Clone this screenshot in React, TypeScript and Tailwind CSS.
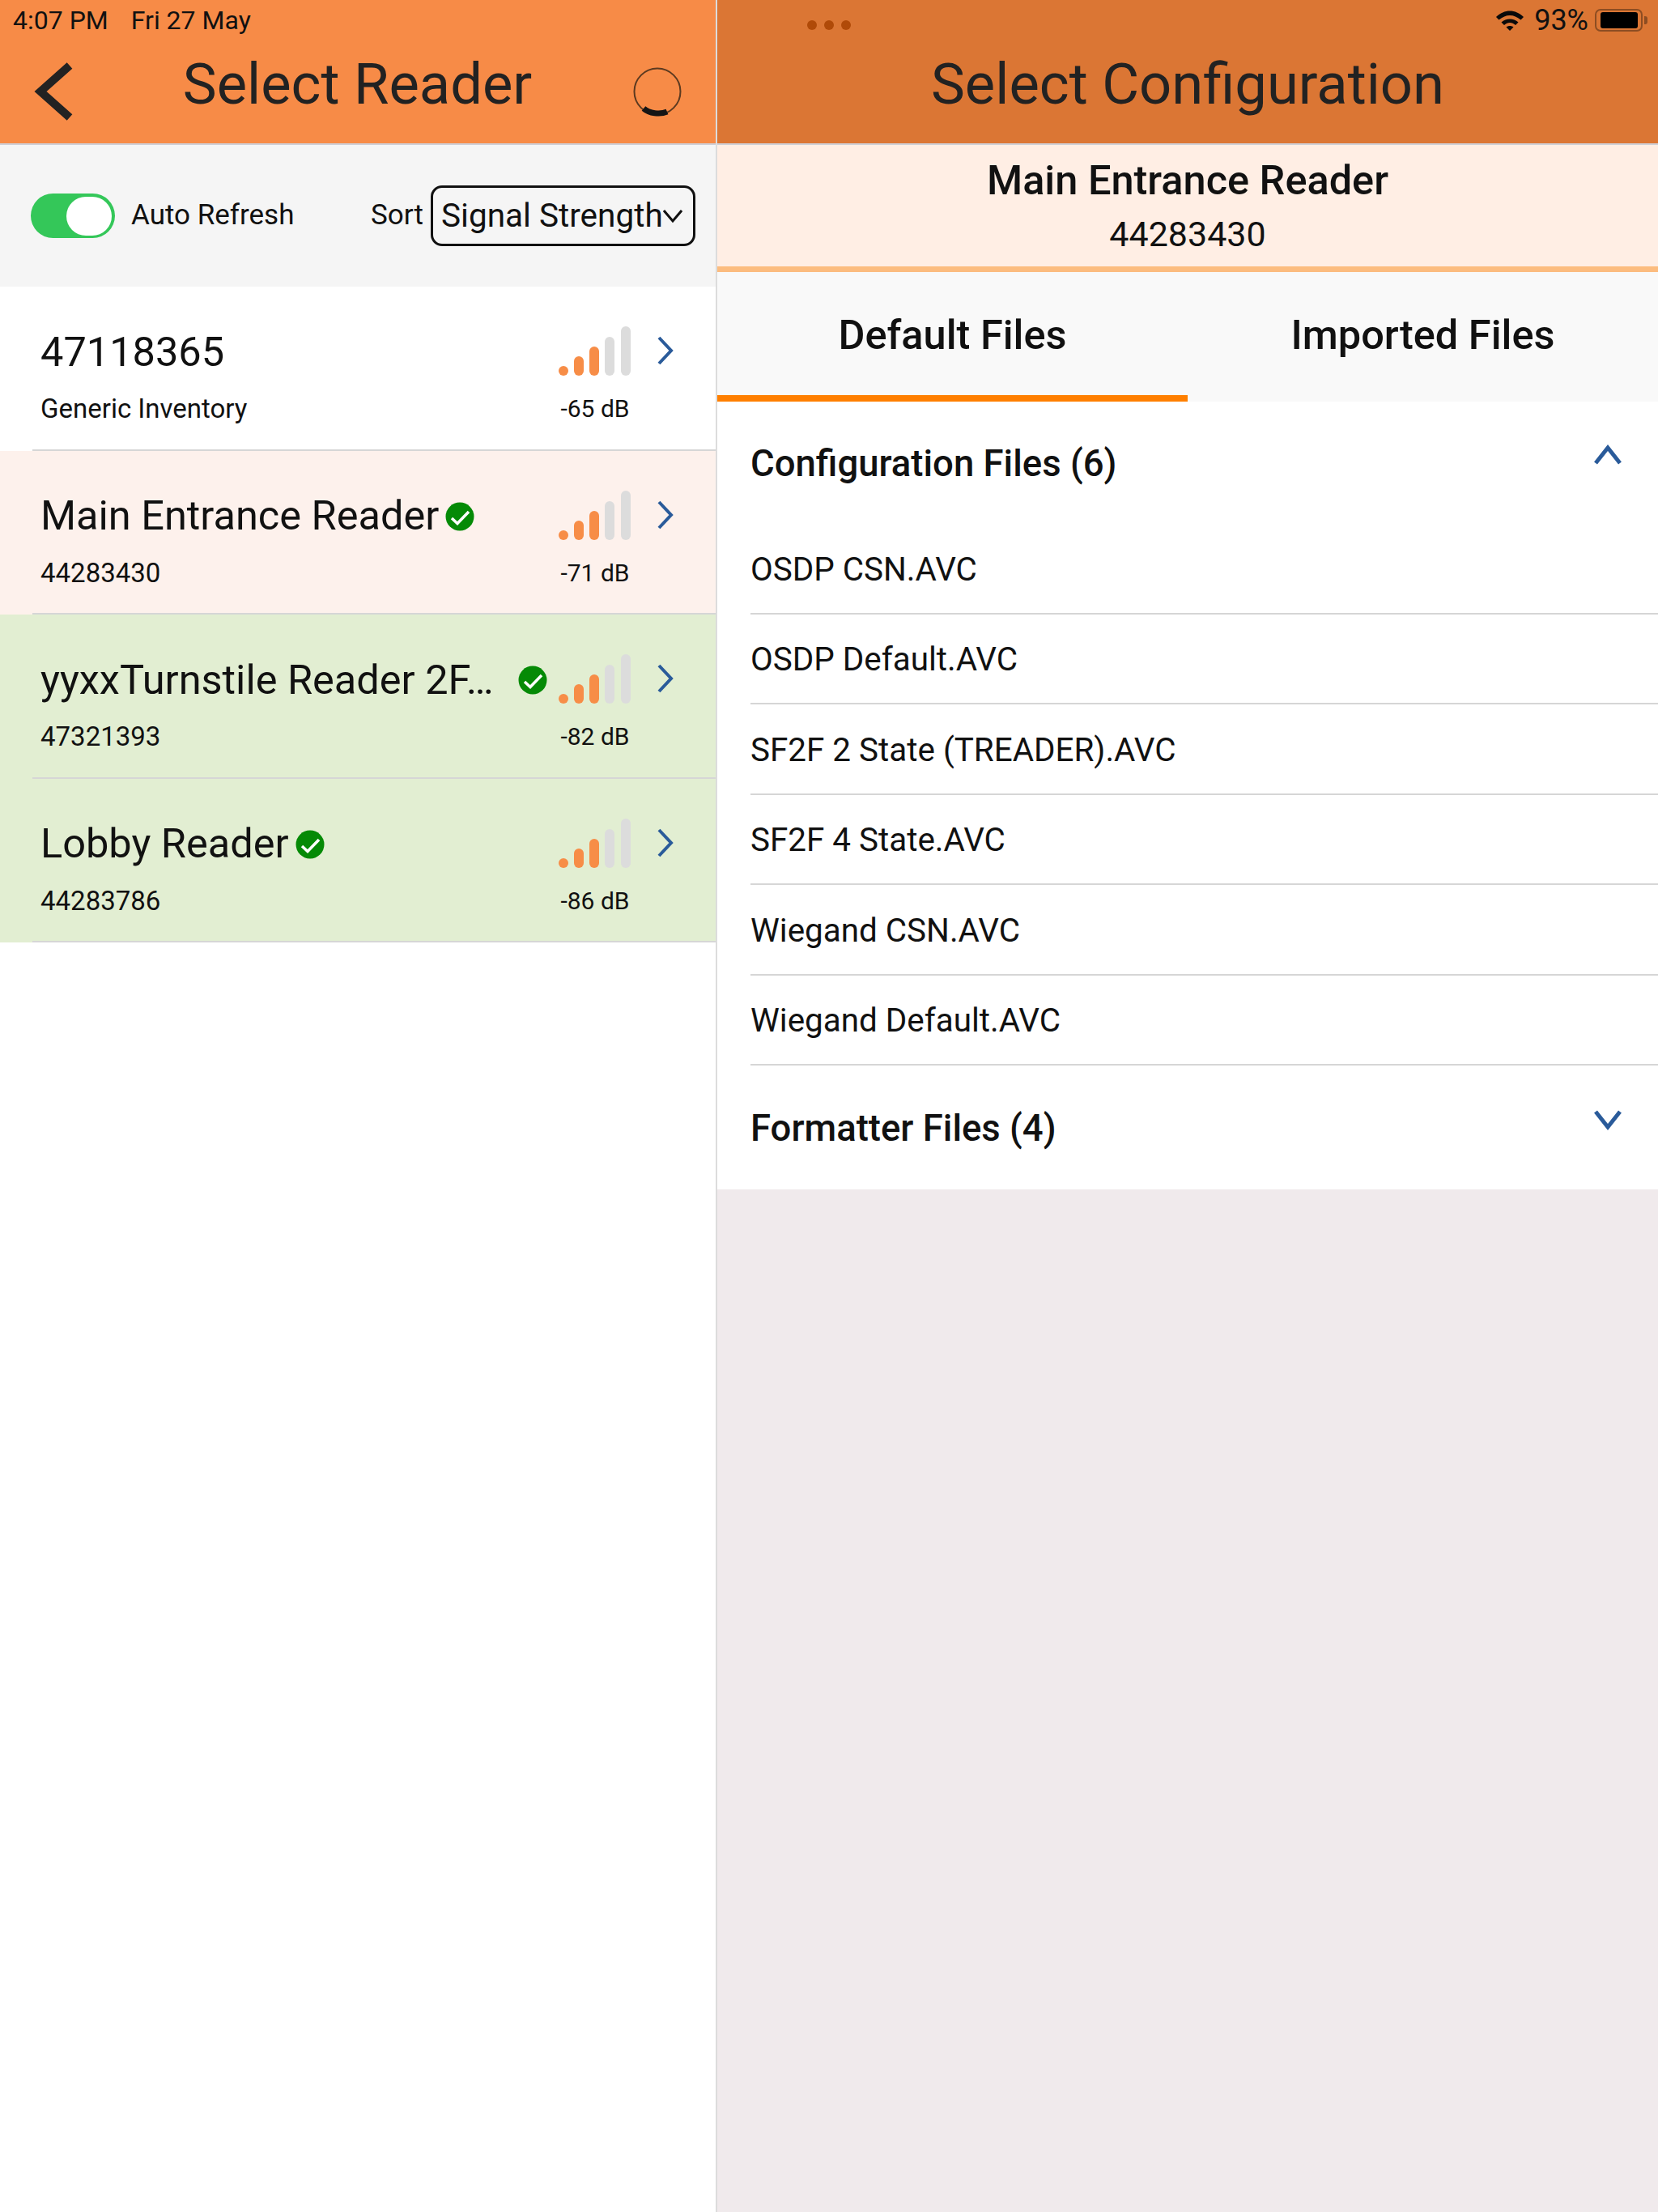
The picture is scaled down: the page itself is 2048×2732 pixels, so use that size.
const readers = [
  { name: "47118365", sub: "Generic Inventory", db: "-65 dB", bg: "bg-white", check: false, nameGap: "" },
  { name: "Main Entrance Reader", sub: "44283430", db: "-71 dB", bg: "bg-[#fdf1ec]", check: true, nameGap: "" },
  { name: "yyxxTurnstile Reader 2F…", sub: "47321393", db: "-82 dB", bg: "bg-[#e2eed2]", check: true, nameGap: "mr-[22px]" },
  { name: "Lobby Reader", sub: "44283786", db: "-86 dB", bg: "bg-[#e2eed2]", check: true, nameGap: "" },
]

const files = ["OSDP CSN.AVC", "OSDP Default.AVC", "SF2F 2 State (TREADER).AVC", "SF2F 4 State.AVC", "Wiegand CSN.AVC", "Wiegand Default.AVC"]

function SignalBars() {
  return (
    <svg width="90" height="62" viewBox="0 0 90 62" className="block">
      <rect x="0" y="49" width="12" height="12" rx="6" fill="#f78d47" />
      <rect x="19" y="37" width="12" height="24" rx="6" fill="#f78d47" />
      <rect x="38" y="25" width="12" height="36" rx="6" fill="#f78d47" />
      <rect x="57" y="13" width="12" height="48" rx="6" fill="#dcdcdc" />
      <rect x="77" y="0" width="12" height="61" rx="6" fill="#dcdcdc" />
    </svg>
  )
}

function Check() {
  return (
    <svg width="36" height="36" viewBox="0 0 36 36" className="ml-[8px] shrink-0">
      <circle cx="18" cy="18" r="17.500" fill="#058a06" />
      <path d="M8 20l7 6.500L29 12" fill="none" stroke="#fff" strokeWidth="3.500" />
    </svg>
  )
}

function Chevron({ d, w, h, sw = 4 }: { d: string, w: number, h: number, sw?: number }) {
  return (
    <svg width={w} height={h} viewBox={`0 0 ${w} ${h}`} className="block">
      <path d={d} fill="none" stroke="#2a5b9a" strokeWidth={sw} />
    </svg>
  )
}

function StatusRight() {
  return (
    <div className="flex items-center h-[30px] justify-end pr-[13px]">
      <svg width="36" height="26" viewBox="0 0 36 26" className="mr-[12px]">
        <path d="M1 9C11 -1 25 -1 35 9l-3.500 3.500C23 5 13 5 4.500 12.500z" fill="#0a0a0a" />
        <path d="M7.500 15.500C13.500 10 22.500 10 28.500 15.500L25 19C20.500 15 15.500 15 11 19z" fill="#0a0a0a" />
        <path d="M13.500 21.500C16 19.500 20 19.500 22.500 21.500L18 26z" fill="#0a0a0a" />
      </svg>
      <span className="text-[36px] leading-[30px] text-[#111] mr-[8px]">93%</span>
      <div className="w-[59px] h-[28px] border-2 border-[#8d4d22] rounded-[7px] flex items-center justify-center">
        <div className="w-[46px] h-[20px] bg-black rounded-[3px]" />
      </div>
      <div className="w-[4px] h-[10px] ml-[2px] bg-[#8d4d22] rounded-r-[3px]" />
    </div>
  )
}

export default function App() {
  return (
    <div className="flex w-[2048px] h-[2732px] font-['Roboto',sans-serif] text-[#111] overflow-hidden">
      <div className="w-[886px] shrink-0 bg-white border-r-2 border-[#dcdcdc] flex flex-col">
        <div className="h-[179px] shrink-0 bg-[#f78b47] border-b-2 border-[#cfcfd6] pt-[10px]">
          <div className="h-[30px] flex items-center pl-[16px] text-[32px] leading-[30px] text-[#111]">
            <span>4:07 PM</span>
            <span className="ml-[28px]">Fri 27 May</span>
          </div>
          <div className="h-[128px] flex items-center text-[#222]">
            <div className="flex-1 pl-[38px]">
              <svg width="54" height="72" viewBox="0 0 54 72" className="block mt-[17px]">
                <path d="M48 4L12 36l36 32" fill="none" stroke="#222" strokeWidth="10" />
              </svg>
            </div>
            <h1 className="text-[70.500px] leading-none whitespace-nowrap ml-[3px]">Select Reader</h1>
            <div className="flex-1 flex justify-end pr-[42px]">
              <svg width="60" height="62" viewBox="0 0 60 62" className="block mt-[17px]">
                <circle cx="30" cy="31" r="28.500" fill="none" stroke="#5c3a20" strokeWidth="2" />
                <path d="M13 52C20 58 33 60 42 56" fill="none" stroke="#151515" strokeWidth="7" />
              </svg>
            </div>
          </div>
        </div>

        <div className="h-[175px] shrink-0 bg-[#f5f5f5] flex items-center pl-[38px] pr-[25px] text-[35px]">
          <div className="w-[104px] h-[55px] rounded-full bg-[#34c759] flex items-center justify-end pr-[4px]">
            <div className="w-[56px] h-[48px] rounded-full bg-white" />
          </div>
          <span className="ml-[20px]">Auto Refresh</span>
          <span className="ml-auto">Sort</span>
          <div className="ml-[9px] w-[327px] h-[75px] border-[3px] border-[#111] rounded-[14px] flex items-center justify-between pl-[10px] pr-[13px]">
            <span className="text-[40.500px] whitespace-nowrap">Signal Strength</span>
            <svg width="24" height="18" viewBox="0 0 24 18"><path d="M1 2l11 13L23 2" fill="none" stroke="#111" strokeWidth="3" /></svg>
          </div>
        </div>

        {readers.map((r) => (
          <div key={r.sub} className={`h-[202.500px] shrink-0 flex flex-col ${r.bg}`}>
            <div className="flex-1 flex pl-[50px]">
              <div className="w-[631px] min-w-0">
                <div className="flex items-center h-[90px] mt-[36px]">
                  <span className={`text-[50.500px] leading-none whitespace-nowrap ${r.nameGap}`}>{r.name}</span>
                  {r.check && <Check />}
                </div>
                <div className="text-[33px] leading-[40px] mt-[5px]">{r.sub}</div>
              </div>
              <div className="ml-[9px] w-[90px] pt-[49px] flex flex-col items-center">
                <SignalBars />
                <div className="text-[30px] leading-[40px] mt-[20px] whitespace-nowrap">{r.db}</div>
              </div>
              <div className="ml-[31px] pt-[60px]">
                <Chevron w={22} h={38} d="M3 3l15 16L3 35" />
              </div>
            </div>
            <div className="ml-[40px] h-[2px] bg-[#d6d6d6]" />
          </div>
        ))}
      </div>

      <div className="flex-1 min-w-0 bg-[#f0eaec] flex flex-col">
        <div className="h-[179px] shrink-0 bg-[#db7634] border-b-2 border-[#cfcfd6] pt-[10px] relative">
          <div className="absolute left-[111px] top-[25px] flex gap-[9px]">
            <div className="w-[12px] h-[12px] rounded-full bg-[#b04a08]" />
            <div className="w-[12px] h-[12px] rounded-full bg-[#b04a08]" />
            <div className="w-[12px] h-[12px] rounded-full bg-[#b04a08]" />
          </div>
          <StatusRight />
          <div className="h-[128px] flex items-center justify-center">
            <h1 className="text-[70.500px] leading-none text-[#222] whitespace-nowrap">Select Configuration</h1>
          </div>
        </div>

        <div className="h-[150px] shrink-0 bg-[#ffeee4] flex flex-col items-center">
          <div className="text-[50.500px] font-medium leading-none mt-[19px] whitespace-nowrap">Main Entrance Reader</div>
          <div className="text-[43px] leading-none mt-[19px]">44283430</div>
        </div>
        <div className="h-[7px] shrink-0 bg-[#fcbc7f]" />

        <div className="h-[160px] shrink-0 bg-[#f9f9f9] flex text-[50.500px] font-medium">
          <div className="flex-1 flex items-center justify-center pt-[3px] border-b-[8px] border-[#ff7f00]">Default Files</div>
          <div className="flex-1 flex items-center justify-center pt-[3px] border-b-[8px] border-transparent">Imported Files</div>
        </div>

        <div className="bg-white">
          <div className="h-[151px] flex items-center justify-between pl-[41px] pr-[44px]">
            <span className="text-[45.500px] font-medium mt-[3px]">Configuration Files (6)</span>
            <div className="-mt-[22px]"><Chevron w={36} h={26} sw={5} d="M3 24L18 5l15 19" /></div>
          </div>
          <div className="pl-[41px]">
            {files.map((f) => (
              <div key={f} className="h-[111.500px] flex items-center pt-[5px] text-[40.400px] border-b-2 border-[#d6d6d6]">{f}</div>
            ))}
          </div>
          <div className="h-[153px] flex items-center justify-between pl-[41px] pr-[44px]">
            <span className="text-[45.500px] font-medium mt-[3px]">Formatter Files (4)</span>
            <div className="-mt-[18px]"><Chevron w={36} h={26} sw={5} d="M3 2l15 19L33 2" /></div>
          </div>
        </div>
      </div>
    </div>
  )
}
